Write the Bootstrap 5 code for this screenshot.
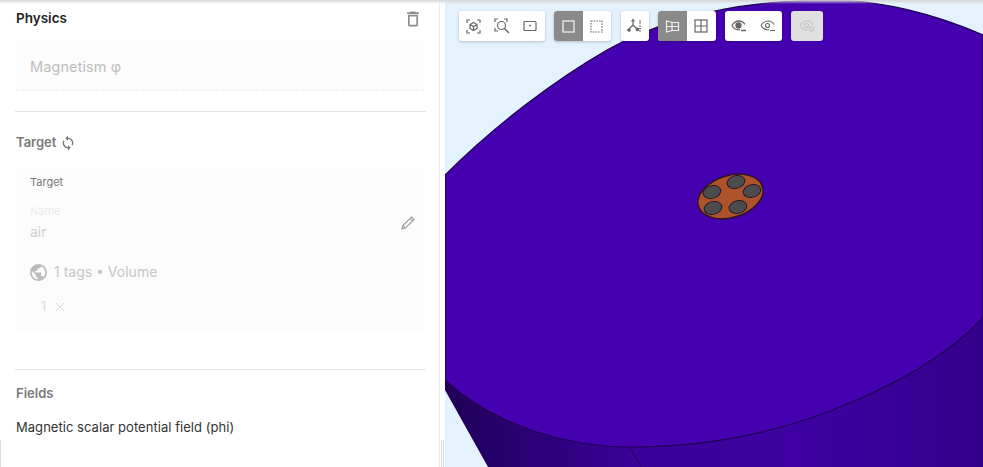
<!DOCTYPE html>
<html lang="en">
<head>
  <meta charset="UTF-8">
  <title>Physics - Target</title>
  <link href="https://cdn.jsdelivr.net/npm/bootstrap@5.3.0/dist/css/bootstrap.min.css" rel="stylesheet">
  <style>
    html, body { height: 100%; overflow: hidden; }
    body { font-family: Inter, "Liberation Sans", sans-serif; background: #fff; }
    .app-wrap { width: 983px; height: 467px; }
    .side-panel { width: 440px; flex: none; border-right: 1px solid #ededed; padding: 0 13px 0 16px; }
    .side-gutter { width: 5px; flex: none; background: #fff; position: relative; }
    .gutter-grip { position: absolute; left: 1px; right: 1px; top: 440px; bottom: 0; border-left: 1px solid #ddd; border-right: 1px solid #ddd; }
    .left-grip { position: absolute; left: 0; top: 440px; bottom: 0; width: 1px; background: #ddd; }
    .view-area { flex: 1 1 auto; background: #e3f2fd; overflow: hidden; }
    .top-shade { position: absolute; left: 0; right: 0; top: 0; height: 4px; background: linear-gradient(#d5d5d5, rgba(255,255,255,0)); pointer-events: none; }
    .scene { position: absolute; left: 0; top: 0; }

    .head-row { height: 40px; padding-bottom: 3px; width: 411px; }
    .title-main { font-size: 13.5px; font-weight: 600; color: #222; }
    .physics-box { width: 408px; height: 51px; background: #fcfcfc; border-bottom: 1px dashed #eee; padding: 3px 0 0 14px; font-size: 14.5px; color: #bdbdbd; letter-spacing: .1px; }
    .rule-line { height: 1px; width: 411px; background: #e3e3e3; margin-left: -1px; }
    .first-rule { margin-top: 20px; }
    .last-rule { margin-top: 36px; }
    .sec-title { font-size: 13px; font-weight: 600; color: #7a7a7a; }
    .target-row { height: 56px; padding-top: 6px; gap: 4px; }
    .target-box { width: 408px; height: 165px; background: #fcfcfc; padding: 7px 14px 0; position: relative; }
    .tiny-label { font-size: 11px; color: #777; line-height: 14px; }
    .name-label { font-size: 11px; color: #ececec; line-height: 14px; margin-top: 15px; }
    .name-value { font-size: 14px; color: #cfcfcf; line-height: 17px; margin-top: 5px; }
    .edit-icon { position: absolute; right: 9px; top: 48px; }
    .tags-row { font-size: 14px; color: #c6c6c6; margin-top: 23px; line-height: 18px; gap: 7px; }
    .chip-row { font-size: 12.5px; color: #dcdcdc; margin-top: 17px; padding-left: 11px; line-height: 18px; gap: 9px; }
    .fields-title { margin-top: 15px; line-height: 16px; }
    .field-name { font-size: 13px; color: #333; margin-top: 18px; line-height: 16px; letter-spacing: .04px; }

    .tool-bar { position: absolute; left: 14px; top: 11px; gap: 9.3px; }
    .tool-group { display: flex; height: 30px; background: #fff; border-radius: 3px; overflow: hidden; box-shadow: 0 1px 3px rgba(0,0,0,.22); }
    .tool-btn { width: 28.6px; height: 30px; display: flex; align-items: center; justify-content: center; color: #666; }
    .tool-btn.on { background: #8a8a8a; color: #eee; }
    .tool-group.off { background: #e0e0e0; box-shadow: none; }
    .tool-group.off .tool-btn { width: 32px; color: #c4c4c4; }
    svg { display: block; }
  </style>
</head>

<body>
  <div class="app-wrap d-flex position-relative">

    <!-- left panel -->
    <div class="side-panel">
      <div class="head-row d-flex align-items-center justify-content-between">
        <span class="title-main">Physics</span>
        <svg class="me-1" width="20" height="20" viewBox="0 0 24 24" fill="#8c8c8c"><path d="M6 19c0 1.100.9 2 2 2h8c1.100 0 2-.9 2-2V7H6v12zM8 9h8v10H8V9zm7.500-5l-1-1h-5l-1 1H5v2h14V4h-3.500z" /></svg>
      </div>
      <div class="physics-box d-flex align-items-center">Magnetism φ</div>
      <div class="rule-line first-rule"></div>

      <div class="target-row d-flex align-items-center">
        <span class="sec-title">Target</span>
        <svg width="16" height="16" viewBox="0 0 24 24" fill="#777"><path d="M12 4V1L8 5l4 4V6c3.310 0 6 2.690 6 6 0 1.010-.25 1.970-.7 2.800l1.460 1.460C19.540 15.030 20 13.570 20 12c0-4.420-3.580-8-8-8zm0 14c-3.310 0-6-2.690-6-6 0-1.010.25-1.970.7-2.800L5.240 7.740C4.460 8.970 4 10.430 4 12c0 4.420 3.580 8 8 8v3l4-4-4-4v3z" /></svg>
      </div>
      <div class="target-box">
        <div class="tiny-label">Target</div>
        <div class="name-label">Name</div>
        <div class="name-value">air</div>
        <svg class="edit-icon" width="14" height="14" viewBox="0 0 14 14" fill="none" stroke="#9a9a9a" stroke-width="1.1"><path d="M1 13l.8-3.400L10.600 1l2.500 2.400-8.800 8.700z" /><path d="M9.200 2.400l2.500 2.500M1.800 9.600l2.500 2.500" /></svg>
        <div class="tags-row d-flex align-items-center">
          <svg width="17" height="17" viewBox="2 2 20 20" fill="#bcbcbc"><path d="M12 2C6.480 2 2 6.480 2 12s4.480 10 10 10 10-4.480 10-10S17.520 2 12 2zm-1 17.930c-3.950-.49-7-3.850-7-7.930 0-.62.08-1.210.21-1.790L9 15v1c0 1.100.9 2 2 2v1.930zm6.900-2.540c-.26-.81-1-1.390-1.900-1.390h-1v-3c0-.55-.45-1-1-1H8v-2h2c.55 0 1-.45 1-1V7h2c1.100 0 2-.9 2-2v-.41c2.930 1.190 5 4.060 5 7.410 0 2.080-.8 3.970-2.100 5.390z" /></svg>
          <span>1 tags • Volume</span>
        </div>
        <div class="chip-row d-flex align-items-center">
          <span>1</span>
          <svg width="10" height="10" viewBox="0 0 10 10" stroke="#dcdcdc" stroke-width="1"><path d="M1 1l8 8M9 1L1 9" /></svg>
        </div>
      </div>

      <div class="rule-line last-rule"></div>
      <div class="sec-title fields-title">Fields</div>
      <div class="field-name">Magnetic scalar potential field (phi)</div>
    </div>

    <div class="side-gutter"><div class="gutter-grip"></div></div>
    <div class="left-grip"></div>

    <!-- 3d view -->
    <div class="view-area position-relative">
      <svg class="scene" width="538" height="467" viewBox="445 0 538 467">
        <defs>
          <linearGradient id="sideFill" gradientUnits="userSpaceOnUse" x1="445" y1="0" x2="983" y2="0">
            <stop offset="0" stop-color="#1f0058" />
            <stop offset=".35" stop-color="#3a0098" />
            <stop offset=".65" stop-color="#3e00a2" />
            <stop offset="1" stop-color="#33008a" />
          </linearGradient>
        </defs>
        <path d="M445 390L488 467H983V300L830 400L630 440L445 375Z" fill="url(#sideFill)" />
        <path d="M630 447L641 467" fill="none" stroke="#22005f" stroke-width="1" />
        <path d="M445 175C495 125 555 80 607 50C650 26 720 0 830 0C880 0 935 14 983 35V318C945 358 890 388 830 411C765 436 695 447 630 447C575 447 500 430 445 380Z" fill="#4500b0" stroke="#1d0050" stroke-width="1.2" />
        <ellipse cx="730.500" cy="196.500" rx="33.500" ry="21" transform="rotate(-17 730.500 196.500)" fill="#ad532b" stroke="#2a1420" stroke-width="1.500" />
        <g fill="#4c4c4e" stroke="#1e1428" stroke-width="1">
          <ellipse cx="736" cy="182" rx="9" ry="6.300" transform="rotate(-14 736 182)" />
          <ellipse cx="712" cy="192" rx="9" ry="6.300" transform="rotate(-14 712 192)" />
          <ellipse cx="752" cy="191" rx="9" ry="6.300" transform="rotate(-14 752 191)" />
          <ellipse cx="713" cy="208" rx="9" ry="6.300" transform="rotate(-14 713 208)" />
          <ellipse cx="738" cy="207" rx="9" ry="6.300" transform="rotate(-14 738 207)" />
        </g>
      </svg>

      <div class="tool-bar d-flex">
        <div class="tool-group">
          <div class="tool-btn"><svg width="15" height="15" viewBox="0 0 15 15" fill="none" stroke="currentColor" stroke-width="1.200"><path d="M1 4V1h3M11 1h3v3M14 11v3h-3M4 14H1v-3" /><path d="M7.500 3.500l3.500 2v4l-3.500 2-3.500-2v-4zM4 5.500l3.500 2 3.500-2M7.500 7.500v4" /></svg></div>
          <div class="tool-btn"><svg width="16" height="16" viewBox="0 0 16 16" fill="none" stroke="currentColor" stroke-width="1.200"><path d="M1 4V1h3M10 1h3v3M1 10v3h3" /><circle cx="7.500" cy="7.500" r="4" /><path d="M10.500 10.500l4.500 4.500" stroke-width="1.500" /></svg></div>
          <div class="tool-btn"><svg width="14" height="12" viewBox="0 0 14 12" fill="none" stroke="currentColor" stroke-width="1.200"><rect x="1" y="1.500" width="12" height="9" rx="1" /><circle cx="7" cy="5.500" r=".9" fill="currentColor" stroke="none" /></svg></div>
        </div>
        <div class="tool-group">
          <div class="tool-btn on"><svg width="13" height="13" viewBox="0 0 13 13" fill="none" stroke="currentColor" stroke-width="1.300"><rect x="1" y="1" width="11" height="11" /></svg></div>
          <div class="tool-btn"><svg width="13" height="13" viewBox="0 0 13 13" fill="none" stroke="currentColor" stroke-width="1.100" stroke-dasharray="1.500 1.200"><rect x="1" y="1" width="11" height="11" /></svg></div>
        </div>
        <div class="tool-group">
          <div class="tool-btn"><svg width="16" height="16" viewBox="0 0 16 16" fill="none" stroke="currentColor" stroke-width="1.200"><path d="M6 7V2M6 7l-4 4M6 7l4 4" /><path d="M4.500 3.500L6 1.500l1.500 2" /><circle cx="2" cy="12" r="1.200" fill="currentColor" /><circle cx="10.400" cy="11.400" r="1.200" fill="currentColor" /><path d="M13 2v4M12 8h2M12 10.500h2M12 13h2" stroke-width="1" /></svg></div>
        </div>
        <div class="tool-group">
          <div class="tool-btn on"><svg width="15" height="15" viewBox="0 0 15 15" fill="none" stroke="currentColor" stroke-width="1.200"><path d="M1.500 2l5.500 1.500v8L1.500 13zM7 3.500h6.500v8H7M1.500 7.500H13.500" /></svg></div>
          <div class="tool-btn"><svg width="14" height="14" viewBox="0 0 14 14" fill="none" stroke="currentColor" stroke-width="1.200"><rect x="1" y="1" width="12" height="12" /><path d="M7 1v12M1 7h12" /></svg></div>
        </div>
        <div class="tool-group">
          <div class="tool-btn"><svg width="16" height="12" viewBox="0 0 16 12" fill="none" stroke="currentColor" stroke-width="1.300"><path d="M1 5.500C3 2 5.500 1 8 1s4.500 1 6 3.500M9 9.500C5.500 10.500 3 9 1 5.500" /><circle cx="7.500" cy="5.500" r="2.500" fill="currentColor" /><path d="M10 10.500h5" /></svg></div>
          <div class="tool-btn"><svg width="16" height="12" viewBox="0 0 16 12" fill="none" stroke="currentColor" stroke-width="1.100"><path d="M1 5.500C3 2 5.500 1 8 1s4.500 1 6 3.500M9 9.500C5.500 10.500 3 9 1 5.500" /><circle cx="7.500" cy="5.500" r="2" /><path d="M10 10.500h5" /></svg></div>
        </div>
        <div class="tool-group off">
          <div class="tool-btn"><svg width="16" height="12" viewBox="0 0 16 12" fill="none" stroke="currentColor" stroke-width="1.100"><path d="M1 5.500C3 2 5.500 1 8 1s4.500 1 6 3.500M9 9.500C5.500 10.500 3 9 1 5.500" /><circle cx="7.500" cy="5.500" r="2" /><circle cx="12.500" cy="9" r="2" /></svg></div>
        </div>
      </div>
    </div>

    <div class="top-shade"></div>
  </div>

  <script src="https://cdn.jsdelivr.net/npm/bootstrap@5.3.0/dist/js/bootstrap.bundle.min.js"></script>
</body>
</html>
